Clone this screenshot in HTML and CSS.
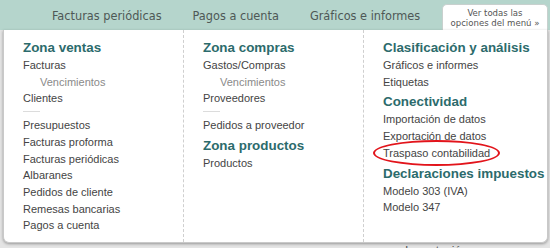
FILE: index.html
```html
<!DOCTYPE html>
<html lang="es">
<head>
<meta charset="utf-8">
<title>Menú</title>
<link rel="stylesheet" href="styles.css">
</head>
<body>
<div class="page">
  <div class="topbar">
    <nav class="nav">
      <span class="nav-item">Facturas periódicas</span>
      <span class="nav-item">Pagos a cuenta</span>
      <span class="nav-item">Gráficos e informes</span>
    </nav>
    <div class="tab">Ver todas las<br>opciones del menú »</div>
  </div>
  <div class="panel">
    <div class="col">
      <div class="head">Zona ventas</div>
      <div class="item">Facturas</div>
      <div class="item sub">Vencimientos</div>
      <div class="item">Clientes</div>
      <div class="sep"></div>
      <div class="item">Presupuestos</div>
      <div class="item">Facturas proforma</div>
      <div class="item">Facturas periódicas</div>
      <div class="item">Albaranes</div>
      <div class="item">Pedidos de cliente</div>
      <div class="item">Remesas bancarias</div>
      <div class="item">Pagos a cuenta</div>
    </div>
    <div class="col">
      <div class="head">Zona compras</div>
      <div class="item">Gastos/Compras</div>
      <div class="item sub">Vencimientos</div>
      <div class="item">Proveedores</div>
      <div class="sep"></div>
      <div class="item">Pedidos a proveedor</div>
      <div class="head next">Zona productos</div>
      <div class="item">Productos</div>
    </div>
    <div class="col">
      <div class="head">Clasificación y análisis</div>
      <div class="item">Gráficos e informes</div>
      <div class="item">Etiquetas</div>
      <div class="head next">Conectividad</div>
      <div class="item">Importación de datos</div>
      <div class="item">Exportación de datos</div>
      <div class="item marked">Traspaso contabilidad<span class="ring"></span></div>
      <div class="head next">Declaraciones impuestos</div>
      <div class="item">Modelo 303 (IVA)</div>
      <div class="item">Modelo 347</div>
    </div>
  </div>
  <div class="below">Importación</div>
</div>
</body>
</html>
```
FILE: styles.css
```css
html, body {
  margin: 0;
  padding: 0;
}
body {
  background: #e4e4e4;
  font-family: "Liberation Sans", Arial, sans-serif;
  width: 550px;
  height: 248px;
  overflow: hidden;
}
.page {
  position: relative;
  width: 550px;
  height: 248px;
  overflow: hidden;
}
.topbar {
  height: 30px;
  background: #b5d5cc;
  display: flex;
  align-items: flex-end;
  justify-content: space-between;
}
.nav {
  display: flex;
  align-items: center;
  height: 30px;
  padding-left: 52px;
  gap: 31px;
  flex-shrink: 0;
}
.nav-item {
  font-family: "DejaVu Sans Condensed", "DejaVu Sans", sans-serif;
  font-stretch: condensed;
  font-size: 12.6px;
  color: #4e5856;
  white-space: nowrap;
}
.tab {
  width: 106px;
  height: 26px;
  margin-right: 2px;
  flex-shrink: 0;
  background: #fff;
  border: 1px solid #c8d0ce;
  border-bottom: none;
  border-radius: 5px 5px 0 0;
  font-family: "DejaVu Sans Condensed", "DejaVu Sans", sans-serif;
  font-stretch: condensed;
  font-size: 9.5px;
  line-height: 10px;
  color: #555;
  text-align: center;
  box-sizing: border-box;
  padding-top: 3px;
}
.panel {
  position: relative;
  z-index: 1;
  margin: 0 2px 0 3px;
  height: 213px;
  background: #fff;
  border: 1px solid #c9c9c9;
  border-top: none;
  border-radius: 0 0 6px 6px;
  box-shadow: 0 1px 3px rgba(0,0,0,0.35);
  display: grid;
  grid-template-columns: 179px 180px 1fr;
  box-sizing: border-box;
}
.col {
  padding: 10px 0 0 19px;
}
.col + .col {
  border-left: 1px dashed #cfcfcf;
  padding-left: 19px;
}
.head {
  font-family: "Liberation Sans", Arial, sans-serif;
  font-weight: bold;
  font-size: 13.4px;
  color: #2c6b6c;
  line-height: 16px;
  height: 17px;
  white-space: nowrap;
}
.head.next {
  margin-top: 4px;
}
.item {
  font-size: 11px;
  line-height: 16.7px;
  color: #444;
  position: relative;
  white-space: nowrap;
}
.item.sub {
  padding-left: 17px;
  color: #8a8a8a;
}
.sep {
  width: 17px;
  height: 1px;
  background: #dcdcdc;
  margin: 4px 0 5px;
}
.ring {
  position: absolute;
  left: -10px;
  top: -5px;
  width: 123px;
  height: 22px;
  border: 2.5px solid #e2141b;
  border-radius: 50%;
}
.below {
  position: absolute;
  left: 405px;
  top: 244px;
  font-size: 12px;
  color: #555;
}
```
